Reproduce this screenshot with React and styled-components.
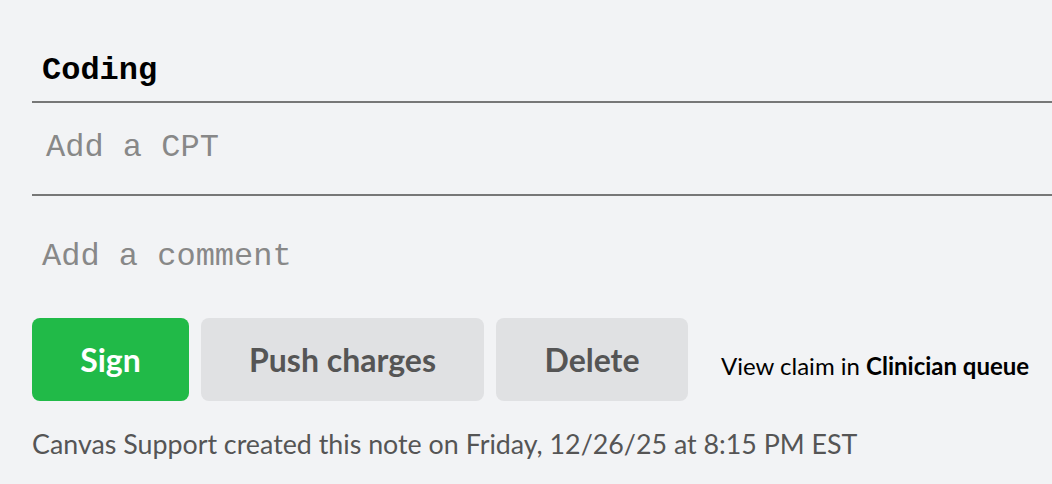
import styled, { createGlobalStyle } from "styled-components"

const Global = createGlobalStyle`
  html, body {
    margin: 0;
    padding: 0;
    background-color: #f2f3f5;
  }
`;

const Page = styled.div`
  padding-left: 32px;
  min-height: 484px;
  box-sizing: border-box;
  overflow: hidden;
`;

const Title = styled.div`
  font-family: "Liberation Mono", "Courier New", monospace;
  font-weight: bold;
  font-size: 32px;
  line-height: 36px;
  color: #000;
  padding: 53px 0 12px 10px;
  border-bottom: 2px solid #777;
`;

const MonoField = styled.div`
  font-family: "Liberation Mono", "Courier New", monospace;
  font-size: 32px;
  line-height: 36px;
  color: #888;
  padding-left: ${(p) => p.$indent}px;
`;

const CptField = styled(MonoField)`
  padding-top: 26.5px;
  padding-bottom: 28.5px;
  border-bottom: 2px solid #777;
`;

const CommentField = styled(MonoField)`
  margin-top: 42.5px;
`;

const Actions = styled.div`
  display: flex;
  align-items: center;
  gap: 12px;
  margin-top: 43.5px;
`;

const Button = styled.button`
  height: 83px;
  width: ${(p) => p.$width}px;
  border: none;
  border-radius: 8px;
  font-family: Lato, "Noto Sans", sans-serif;
  font-weight: bold;
  font-size: 32px;
  background-color: ${(p) => (p.$primary ? "#21ba48" : "#e0e1e3")};
  color: ${(p) => (p.$primary ? "#fff" : "#555")};
  padding: 0;
  cursor: pointer;
`;

const ClaimLink = styled.div`
  font-family: Lato, "Noto Sans", sans-serif;
  font-size: 24px;
  color: #000;
  margin-left: 21px;
  margin-top: 12px;

  b {
    font-weight: bold;
  }
`;

const Footer = styled.div`
  font-family: Lato, "Noto Sans", sans-serif;
  font-size: 26.8px;
  line-height: 32px;
  color: #555;
  margin-top: 26.5px;
`;

const App = () => {
  return (
    <Page>
      <Global />
      <Title>Coding</Title>
      <CptField $indent={14}>Add a CPT</CptField>
      <CommentField $indent={10}>Add a comment</CommentField>
      <Actions>
        <Button $primary $width={157}>Sign</Button>
        <Button $width={283}>Push charges</Button>
        <Button $width={192}>Delete</Button>
        <ClaimLink>
          View claim in <b>Clinician queue</b>
        </ClaimLink>
      </Actions>
      <Footer>Canvas Support created this note on Friday, 12/26/25 at 8:15 PM EST</Footer>
    </Page>
  )
}

export default App
